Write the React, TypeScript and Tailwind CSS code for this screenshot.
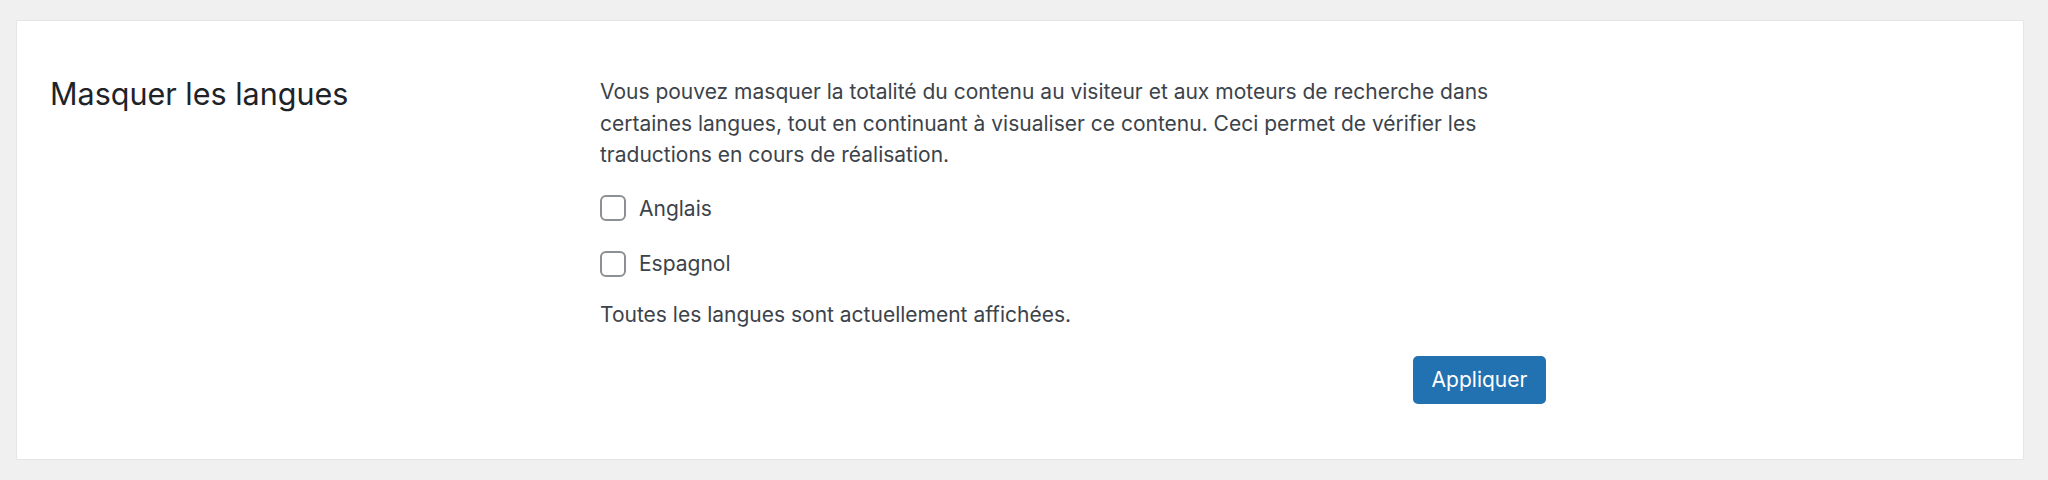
export default function App() {
  return (
    <div className="min-h-screen h-[480px] bg-[#f0f0f1] pt-5 pl-4 pr-6 font-['Inter',sans-serif]">
      <div className="h-[440px] bg-white border border-[#e6e6e7] pl-[33px] pt-[55px]">
        <div className="grid grid-cols-[550px_946px]">
          {/* Section title */}
          <h2 className="text-[30.5px] leading-[36px] text-[#1d2327] font-normal">Masquer les langues</h2>

          {/* Options */}
          <div className="flex flex-col text-[21px] leading-[31.5px] text-[#3c434a]">
            <p className="max-w-[915px]">
              Vous pouvez masquer la totalité du contenu au visiteur et aux moteurs de recherche dans
              certaines langues, tout en continuant à visualiser ce contenu. Ceci permet de vérifier les
              traductions en cours de réalisation.
            </p>
            <div className="mt-[22px] flex flex-col gap-[24px]">
              <label className="flex items-center gap-[13px]">
                <span className="h-[26px] w-[26px] rounded-[6px] border-2 border-[#8c8f94] bg-white" />
                <span>Anglais</span>
              </label>
              <label className="flex items-center gap-[13px]">
                <span className="h-[26px] w-[26px] rounded-[6px] border-2 border-[#8c8f94] bg-white" />
                <span>Espagnol</span>
              </label>
            </div>
            <p className="mt-[19px]">Toutes les langues sont actuellement affichées.</p>
            <div className="mt-[26px] flex justify-end">
              <button className="h-[48px] w-[133px] rounded-[5px] bg-[#2271b1] text-white text-[21px] flex items-center justify-center">
                Appliquer
              </button>
            </div>
          </div>
        </div>
      </div>
    </div>
  );
}
